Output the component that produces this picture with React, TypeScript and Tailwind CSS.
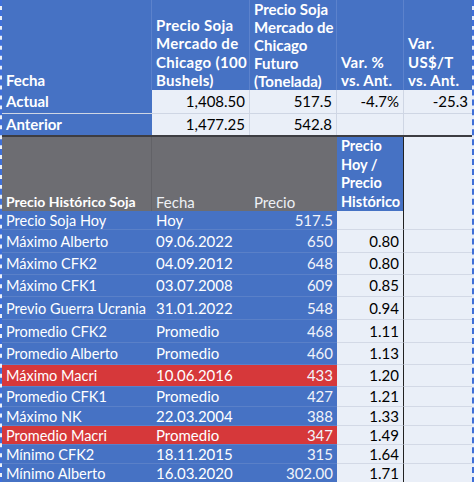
import React from 'react';

const font = { fontFamily: 'Lato, "Open Sans", sans-serif' };

const rows = [
  { name: 'Precio Soja Hoy', date: 'Hoy', price: '517.5', ratio: '', red: false, h: 'grid-rows-[19px]' },
  { name: 'Máximo Alberto', date: '09.06.2022', price: '650', ratio: '0.80', red: false, h: 'grid-rows-[23px]' },
  { name: 'Máximo CFK2', date: '04.09.2012', price: '648', ratio: '0.80', red: false, h: 'grid-rows-[22px]' },
  { name: 'Máximo CFK1', date: '03.07.2008', price: '609', ratio: '0.85', red: false, h: 'grid-rows-[22px]' },
  { name: 'Previo Guerra Ucrania', date: '31.01.2022', price: '548', ratio: '0.94', red: false, h: 'grid-rows-[23px]' },
  { name: 'Promedio CFK2', date: 'Promedio', price: '468', ratio: '1.11', red: false, h: 'grid-rows-[23px]' },
  { name: 'Promedio Alberto', date: 'Promedio', price: '460', ratio: '1.13', red: false, h: 'grid-rows-[22px]' },
  { name: 'Máximo Macri', date: '10.06.2016', price: '433', ratio: '1.20', red: true, h: 'grid-rows-[22px]' },
  { name: 'Promedio CFK1', date: 'Promedio', price: '427', ratio: '1.21', red: false, h: 'grid-rows-[20px]' },
  { name: 'Máximo NK', date: '22.03.2004', price: '388', ratio: '1.33', red: false, h: 'grid-rows-[19px]' },
  { name: 'Promedio Macri', date: 'Promedio', price: '347', ratio: '1.49', red: true, h: 'grid-rows-[19px]' },
  { name: 'Mínimo CFK2', date: '18.11.2015', price: '315', ratio: '1.64', red: false, h: 'grid-rows-[19px]' },
  { name: 'Mínimo Alberto', date: '16.03.2020', price: '302.00', ratio: '1.71', red: false, h: 'grid-rows-[19px]' },
];

const grid = 'grid grid-cols-[150px_98px_87px_67px_68px]';
const headCell = 'flex flex-col justify-end px-[4px] overflow-hidden whitespace-nowrap';

function Lines({ items }: { items: string[] }) {
  return (
    <>
      {items.map(t => (
        <span key={t}>{t}</span>
      ))}
    </>
  );
}

export default function App() {
  return (
    <div className="w-[474px] h-[482px] overflow-hidden bg-[#eaeff8] text-[15px] leading-[19px]" style={font}>
      <div className="w-[474px] border-l-2 border-r-2 border-dashed border-[#3f6fd8]">
        {/* cabecera */}
        <div className={`${grid} grid-rows-[90px] bg-[#4672c4] text-white font-bold leading-[18.6px]`}>
          <div className={`${headCell} border-r border-[#5c82cc]`}>Fecha</div>
          <div className={`${headCell} tracking-[0.3px] border-r border-[#5c82cc]`}>
            <Lines items={['Precio Soja', 'Mercado de', 'Chicago (100', 'Bushels)']} />
          </div>
          <div className={`${headCell} leading-[18px] border-r border-[#5c82cc]`}>
            <Lines items={['Precio Soja', 'Mercado de', 'Chicago', 'Futuro', '(Tonelada)']} />
          </div>
          <div className={`${headCell} tracking-[0.3px] border-r border-[#5c82cc]`}>
            <Lines items={['Var. %', 'vs. Ant.']} />
          </div>
          <div className={`${headCell} tracking-[0.3px]`}>
            <Lines items={['Var.', 'US$/T', 'vs. Ant.']} />
          </div>
        </div>

        <div className={`${grid} grid-rows-[23px] border-b border-[#cfd6e4]`}>
          <div className="bg-[#4672c4] text-white font-bold px-[4px] flex items-center">Actual</div>
          <div className="pr-[4px] flex items-center justify-end border-r border-[#cfd6e4]">1,408.50</div>
          <div className="pr-[4px] flex items-center justify-end border-r border-[#cfd6e4]">517.5</div>
          <div className="pr-[4px] flex items-center justify-end border-r border-[#cfd6e4]">-4.7%</div>
          <div className="pr-[4px] flex items-center justify-end">-25.3</div>
        </div>
        <div className={`${grid} grid-rows-[21px] border-b-2 border-[#3d3d42]`}>
          <div className="bg-[#4672c4] text-white font-bold px-[4px] flex items-center">Anterior</div>
          <div className="pr-[4px] flex items-center justify-end border-r border-[#cfd6e4]">1,477.25</div>
          <div className="pr-[4px] flex items-center justify-end border-r border-[#cfd6e4]">542.8</div>
          <div className="border-r border-[#cfd6e4]"></div>
          <div></div>
        </div>

        {/* histórico */}
        <div className={`${grid} grid-rows-[74px] leading-[18.5px]`}>
          <div className={`${headCell} bg-[#6d6d72] text-white font-bold text-[14px] border-r border-[#626267]`}>Precio Histórico Soja</div>
          <div className={`${headCell} bg-[#6d6d72] text-[#eef0f5]`}>Fecha</div>
          <div className={`${headCell} bg-[#6d6d72] text-[#eef0f5]`}>Precio</div>
          <div className={`${headCell} bg-[#4672c4] text-white font-bold text-[14.5px] border-r border-[#222]`}>
            <Lines items={['Precio', 'Hoy /', 'Precio ', 'Histórico']} />
          </div>
          <div></div>
        </div>

        {rows.map(r => {
          const bg = r.red ? 'bg-[#d6383a]' : 'bg-[#4672c4]';
          return (
            <div key={r.name} className={`${grid} ${r.h}`}>
              <div className={`${bg} text-white text-[14.5px] px-[4px] flex items-center whitespace-nowrap border-b border-[#5a80c8]`}>{r.name}</div>
              <div className={`${bg} text-white px-[4px] flex items-center border-b border-[#5a80c8]`}>{r.date}</div>
              <div className={`${bg} text-[#f2f4fa] pr-[4px] flex items-center justify-end border-b border-[#5a80c8]`}>{r.price}</div>
              <div className="pr-[4px] flex items-center justify-end text-black border-r border-r-[#222] border-b border-b-[#d3d9e6]">{r.ratio}</div>
              <div className="border-b border-[#d3d9e6]"></div>
            </div>
          );
        })}
      </div>
    </div>
  );
}
